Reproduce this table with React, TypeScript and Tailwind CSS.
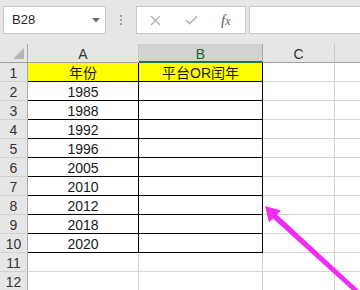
import React from "react";

const years = ["1985", "1988", "1992", "1996", "2005", "2010", "2012", "2018", "2020"];

const txt = "leading-[20px] text-[14px] text-[#1a1a1a]";

function RowHead({ n }: { n: number }) {
  return (
    <div className="h-[19px] border-r border-b border-r-[#ababab] border-b-[#d0d0d0] bg-[#e6e6e6] text-center leading-[20px] text-[14px] text-[#333]">
      {n}
    </div>
  );
}

function Sheet() {
  const rows = [] as React.ReactNode[];
  for (let r = 1; r <= 12; r++) {
    const boxed = r <= 10;
    const yellow = r === 1;
    const aText = r === 1 ? "年份" : r <= 10 ? years[r - 2] : "";
    const bText = r === 1 ? "平台OR闰年" : "";
    const edge = boxed ? "border-r-black border-b-black" : "border-r-[#d4d4d4] border-b-[#d4d4d4]";
    const fill = yellow ? "bg-[#ffff00]" : "bg-white";
    rows.push(
      <React.Fragment key={r}>
        <RowHead n={r} />
        <div className={`h-[19px] border-r border-b text-center ${txt} ${edge} ${fill}`}>{aText}</div>
        <div className={`h-[19px] border-r border-b text-center ${txt} ${edge} ${fill}`}>{bText}</div>
        <div className="h-[19px] border-r border-b border-[#d4d4d4] bg-white" />
        <div className="h-[19px] border-b border-[#d4d4d4] bg-white" />
      </React.Fragment>
    );
  }
  return (
    <div className="grid grid-cols-[28px_111px_124px_72px_1fr]">
      {/* column headers */}
      <div className="relative h-[19px] border-r border-b border-r-[#ababab] border-b-[#9f9f9f] bg-[#e6e6e6]">
        <svg className="absolute left-[13px] top-[4px]" width="12" height="11" viewBox="0 0 12 11">
          <polygon points="11,0 11,11 0,11" fill="#b5b5b5" />
        </svg>
      </div>
      <div className="h-[19px] border-r border-b border-r-[#c6c6c6] border-b-[#9f9f9f] bg-[#e6e6e6] text-center leading-[20px] text-[14px] text-[#333]">
        A
      </div>
      <div className="h-[19px] border-r border-b-2 border-r-[#ababab] border-b-[#217346] bg-[#d2d2d2] text-center leading-[20px] text-[14px] text-[#1d5e36]">
        B
      </div>
      <div className="h-[19px] border-r border-b border-r-[#c6c6c6] border-b-[#9f9f9f] bg-[#e6e6e6] text-center leading-[20px] text-[14px] text-[#333]">
        C
      </div>
      <div className="h-[19px] border-b border-b-[#9f9f9f] bg-[#e6e6e6]" />
      {rows}
    </div>
  );
}

function FormulaBar() {
  return (
    <div className="flex h-[44px] items-start bg-[#e6e6e6] pt-[6px]">
      {/* name box */}
      <div className="ml-[3px] flex h-[28px] w-[103px] items-center border border-[#c6c6c6] bg-white pl-[8px] pr-[5px]">
        <span className="flex-1 text-[13px] leading-[14px] text-[#262626]">B28</span>
        <svg width="8" height="5" viewBox="0 0 8 5">
          <polygon points="0,0 8,0 4,4.5" fill="#6b6b6b" />
        </svg>
      </div>
      {/* grip */}
      <div className="flex h-[28px] w-[30px] flex-col items-center justify-center gap-[2px]">
        <span className="block h-[2px] w-[2px] bg-[#a0a0a0]" />
        <span className="block h-[2px] w-[2px] bg-[#a0a0a0]" />
        <span className="block h-[2px] w-[2px] bg-[#a0a0a0]" />
      </div>
      {/* cancel / enter / function */}
      <div className="flex h-[28px] w-[110px] items-center border border-[#c6c6c6] bg-white">
        <svg className="ml-[13px]" width="11" height="11" viewBox="0 0 11 11">
          <path d="M1 1L10 10M10 1L1 10" stroke="#b4b4b4" strokeWidth="1.4" fill="none" />
        </svg>
        <svg className="ml-[24px]" width="13" height="10" viewBox="0 0 13 10">
          <path d="M1 5.2L4.6 8.6L12 1.2" stroke="#b4b4b4" strokeWidth="1.6" fill="none" />
        </svg>
        <span className="ml-[23px] text-[15px] italic leading-[16px] text-[#5e5e5e] [font-family:'Liberation_Serif',serif]">
          f<span className="text-[12px]">x</span>
        </span>
      </div>
      {/* formula input */}
      <div className="ml-[3px] h-[28px] flex-1 border border-r-0 border-[#c6c6c6] bg-white" />
    </div>
  );
}

export default function App() {
  return (
    <div className="relative h-[290px] w-[360px] overflow-hidden bg-white [font-family:'Liberation_Sans','Noto_Sans_CJK_SC',sans-serif]">
      <FormulaBar />
      <Sheet />
      {/* pointer arrow */}
      <svg className="pointer-events-none absolute left-0 top-0" width="360" height="290" viewBox="0 0 360 290">
        <polygon
          points="265,206 281,210.5 277,214.6 362,293 358.5,296 273,218.4 269,222.5"
          fill="#ee2cf2"
        />
      </svg>
    </div>
  );
}
